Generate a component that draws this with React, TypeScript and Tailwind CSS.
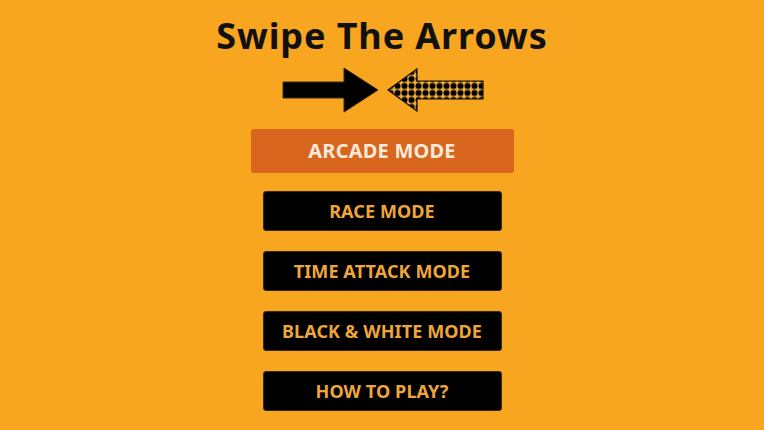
import React from "react";

function Arrows() {
  return (
    <svg width="206" height="46" viewBox="0 0 206 46" className="block">
      <defs>
        <pattern id="dots" width="7" height="7" patternUnits="userSpaceOnUse" x="1" y="1.5">
          <circle cx="3.5" cy="3.5" r="3" fill="#000" />
        </pattern>
      </defs>
      {/* solid arrow pointing right */}
      <polygon
        points="2,15 63,15 63,1 97,23 63,45 63,31 2,31"
        fill="#000"
        stroke="#3a2a10"
        strokeWidth="1"
      />
      {/* checkered arrow pointing left */}
      <polygon points="107,23 136,2 136,14 202,14 202,32 136,32 136,44" fill="#eeab3a" />
      <polygon
        points="107,23 136,2 136,14 202,14 202,32 136,32 136,44"
        fill="url(#dots)"
        stroke="#1a1206"
        strokeWidth="1.2"
      />
    </svg>
  );
}

function MenuButton({ label, active }: { label: string; active?: boolean }) {
  if (active) {
    return (
      <div className="w-[263px] h-[44px] rounded-[3px] bg-[#d9661f] flex items-center justify-center text-[#f8ead8] text-[20px] font-bold tracking-[0.2px]">
        {label}
      </div>
    );
  }
  return (
    <div className="w-[239px] h-[40px] rounded-[3px] bg-black border border-[#3b2a10] flex items-center justify-center text-[#eea63a] text-[18px] font-bold tracking-[0.1px]">
      {label}
    </div>
  );
}

export default function App() {
  return (
    <div
      className="w-full h-screen bg-[#f8a520] flex flex-col items-center overflow-hidden"
      style={{ fontFamily: '"Noto Sans", "Open Sans", sans-serif' }}
    >
      <div className="pt-[16px] text-[36px] leading-[40px] font-bold tracking-[0.9px] text-[#111]">
        Swipe The Arrows
      </div>
      <div className="mt-[11px] ml-[4px]">
        <Arrows />
      </div>
      <div className="mt-[16px]">
        <MenuButton label="ARCADE MODE" active />
      </div>
      <div className="mt-[18px] flex flex-col items-center gap-[20px]">
        <MenuButton label="RACE MODE" />
        <MenuButton label="TIME ATTACK MODE" />
        <MenuButton label="BLACK & WHITE MODE" />
        <MenuButton label="HOW TO PLAY?" />
      </div>
    </div>
  );
}
